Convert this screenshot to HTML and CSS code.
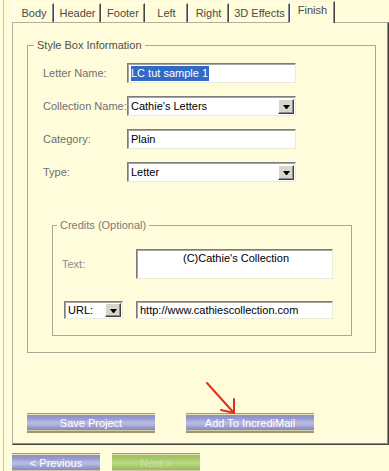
FILE: index.html
```html
<!DOCTYPE html>
<html lang="en">
<head>
  <meta charset="UTF-8" />
  <title>Style Box - Finish</title>
  <link rel="stylesheet" href="styles.css">
</head>
<body>
  <div class="frame">
    <div class="tabs">
      <div class="tab t-body">Body</div>
      <div class="tab t-header">Header</div>
      <div class="tab t-footer">Footer</div>
      <div class="tab t-left">Left</div>
      <div class="tab t-right">Right</div>
      <div class="tab t-3d">3D Effects</div>
      <div class="tab t-finish active">Finish</div>
    </div>

    <div class="panel">
      <fieldset class="group">
        <legend>Style Box Information</legend>
        <div class="rows">
          <div class="row">
            <span class="label">Letter Name:</span>
            <div class="field"><span class="sel">LC tut sample 1</span></div>
          </div>
          <div class="row">
            <span class="label">Collection Name:</span>
            <div class="field combo"><span class="val">Cathie's Letters</span><span class="drop"><i></i></span></div>
          </div>
          <div class="row">
            <span class="label">Category:</span>
            <div class="field">Plain</div>
          </div>
          <div class="row">
            <span class="label">Type:</span>
            <div class="field combo"><span class="val">Letter</span><span class="drop"><i></i></span></div>
          </div>
        </div>

        <fieldset class="credits">
          <legend>Credits (Optional)</legend>
          <div class="credit-row">
            <span class="label short">Text:</span>
            <div class="field memo">(C)Cathie's Collection</div>
          </div>
          <div class="credit-row url-row">
            <div class="field combo url-combo"><span class="val">URL:</span><span class="drop"><i></i></span></div>
            <div class="field wide">http://www.cathiescollection.com</div>
          </div>
        </fieldset>
      </fieldset>

      <div class="actions">
        <button class="btn">Save Project</button>
        <button class="btn">Add To IncrediMail</button>
      </div>

      <!-- red pointer drawn over the screenshot -->
      <svg class="arrow" width="40" height="40" viewBox="0 0 40 40">
        <path d="M7 5 L34 35 M34 35 L34 21 M34 35 L21 32" stroke="#e0301c" stroke-width="2" fill="none" stroke-linecap="round" />
      </svg>
    </div>

    <div class="nav">
      <button class="btn small">&lt; Previous</button>
      <button class="btn small green">Next &gt;</button>
    </div>
  </div>
</body>
</html>
```

FILE: styles.css
```css
body {
  margin: 0;
  background: #fffcdb;
  font-family: "Liberation Sans", Arial, sans-serif;
  font-size: 11px;
  color: #4a4a4a;
  overflow: hidden;
}

.frame {
  margin-left: 3px;
  border-left: 1px solid #cac6ae;
  padding-left: 8px;
  height: 471px;
  box-sizing: border-box;
}

/* tab strip */
.tabs {
  display: flex;
  align-items: flex-end;
  height: 22px;
  padding-left: 2px;
}

.tab {
  height: 19px;
  box-sizing: border-box;
  border-top: 1px solid #fff;
  border-left: 1px solid #fff;
  border-right: 1px solid #454545;
  box-shadow: inset -1px 0 #8c8c8c;
  text-align: center;
  line-height: 18px;
  color: #4a4a4a;
  background: #fffcdb;
}

.t-body { width: 40px; }
.t-header { width: 47px; }
.t-footer { width: 44px; }
.t-left { width: 43px; }
.t-right { width: 41px; }
.t-3d { width: 61px; }
.t-finish { width: 45px; }

.tab.active {
  height: 22px;
  margin-bottom: -1px;
  line-height: 17px;
  position: relative;
  z-index: 1;
  border-top-color: #f4f2e6;
}

/* main panel */
.panel {
  position: relative;
  height: 423px;
  box-sizing: border-box;
  border: 1px solid;
  border-color: #b3af9a #454545 #454545 #b3af9a;
  box-shadow: inset -1px -1px #8c8c8c;
  padding: 0 12px 11px 14px;
  display: flex;
  flex-direction: column;
}

fieldset {
  margin: 0;
  min-width: 0;
  border: 1px solid #aaa797;
}

legend {
  padding: 0 3px;
  line-height: 14px;
}

.group {
  margin-top: 15px;
  padding: 11px 15px 16px;
}

.group > legend {
  margin-left: -9px;
  color: #4f4f4f;
}

.rows {
  display: flex;
  flex-direction: column;
  gap: 13px;
}

.row {
  display: flex;
  align-items: center;
}

.label {
  width: 84px;
  flex-shrink: 0;
  color: #707070;
}

.field {
  width: 169px;
  height: 20px;
  box-sizing: border-box;
  background: #fff;
  border: 1px solid;
  border-color: #7c7c7c #ecead8 #ecead8 #7c7c7c;
  box-shadow: inset 1px 1px #a4a4a4;
  padding-left: 3px;
  line-height: 18px;
  color: #000;
  white-space: nowrap;
  overflow: hidden;
}

.sel {
  background: #316ac5;
  color: #fff;
  display: inline-block;
  line-height: 15px;
  padding: 0 1px 0 0;
}

.combo {
  display: flex;
  align-items: center;
  padding-right: 1px;
}

.combo .val {
  flex: 1;
}

.drop {
  width: 16px;
  height: 15px;
  box-sizing: border-box;
  background: #d8d5cc;
  border: 1px solid;
  border-color: #fff #404040 #404040 #fff;
  box-shadow: inset -1px -1px #8c8c8c;
  display: flex;
  align-items: center;
  justify-content: center;
}

.drop i {
  width: 1px;
  height: 0;
  border-left: 3px solid transparent;
  border-right: 3px solid transparent;
  border-top: 4px solid #000;
  margin-top: 1px;
}

/* credits box */
.credits {
  margin: 36px 8px 0 9px;
  padding: 17px 10px 16px 9px;
}

.credits > legend {
  margin-left: -5px;
  color: #7a7a7a;
}

.credit-row {
  display: flex;
  align-items: center;
}

.label.short {
  width: 74px;
  color: #8a8a8a;
}

.memo {
  width: 197px;
  height: 30px;
  text-align: center;
  line-height: 14px;
  padding-top: 1px;
}

.url-row {
  margin-top: 22px;
}

.url-combo {
  width: 59px;
  height: 18px;
  margin: 0 13px 0 2px;
  line-height: 16px;
}

.url-combo .drop {
  height: 14px;
}

.wide {
  width: 197px;
  height: 18px;
  line-height: 16px;
}

/* buttons */
.actions {
  margin-top: auto;
  display: flex;
  gap: 31px;
}

.btn {
  width: 128px;
  height: 20px;
  border: 0;
  padding: 0;
  font-family: "Liberation Sans", Arial, sans-serif;
  font-size: 11px;
  color: #fff;
  cursor: pointer;
  background: linear-gradient(to bottom,
    #a39872 0, #a39872 1px,
    #e9e3c2 1px, #e9e3c2 2px,
    #8a8ec3 2px, #989cce 6px,
    #b6b9e2 9px, #b6b9e2 11px,
    #9a9ed0 14px, #868abe 17px,
    #d2c9a5 17px, #d2c9a5 18px,
    #a0956e 18px, #a0956e 20px);
}

.arrow {
  position: absolute;
  left: 187px;
  top: 355px;
}

.nav {
  margin-top: 8px;
  display: flex;
  gap: 12px;
}

.btn.small {
  width: 88px;
}

.btn.green {
  color: #c9dfa2;
  background: linear-gradient(to bottom,
    #a39872 0, #a39872 1px,
    #e9e3c2 1px, #e9e3c2 2px,
    #9cc15c 2px, #a6c967 6px,
    #b8d683 9px, #b8d683 11px,
    #a6c967 14px, #98bd58 17px,
    #d2c9a5 17px, #d2c9a5 18px,
    #a0956e 18px, #a0956e 20px);
}
```
